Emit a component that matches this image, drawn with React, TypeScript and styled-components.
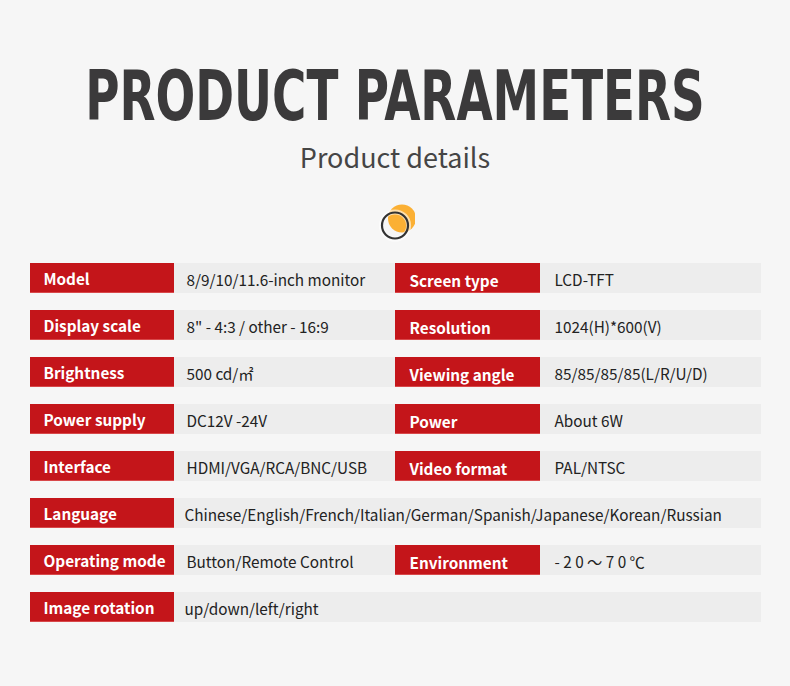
import React from "react";
import styled, { createGlobalStyle } from "styled-components";

const GlobalStyle = createGlobalStyle`
  html, body {
    margin: 0;
    padding: 0;
    background: #f6f6f6;
  }
`;

const Page = styled.div`
  width: 790px;
  height: 686px;
  background: #f6f6f6;
  font-family: "Noto Sans CJK SC", "Noto Sans", sans-serif;
  display: flex;
  flex-direction: column;
  align-items: center;
  overflow: hidden;
`;

const Title = styled.h1`
  margin: 58px 0 0;
  font-family: "DejaVu Sans Condensed", "DejaVu Sans", sans-serif;
  font-weight: 700;
  font-size: 70px;
  line-height: 76px;
  color: #3b3a3b;
  transform: scaleX(0.743);
  white-space: nowrap;
`;

const Subtitle = styled.h2`
  margin: 5px 0 0;
  font-weight: 400;
  font-size: 27px;
  line-height: 35px;
  color: #454545;
`;

const Mark = styled.svg`
  margin-top: 29px;
  width: 40px;
  height: 40px;
`;

const Table = styled.div`
  margin-top: 20px;
  width: 731px;
  display: flex;
  flex-direction: column;
  gap: 17px;
`;

const Row = styled.div`
  display: flex;
  height: 30px;
  background: #ededed;
`;

const Label = styled.div<{ $w: number; $pad: number; $shift?: number }>`
  width: ${(p) => p.$w}px;
  flex: none;
  box-sizing: border-box;
  padding-left: ${(p) => p.$pad}px;
  padding-top: ${(p) => p.$shift ?? 0}px;
  background: #c4151a;
  border-bottom: 1px solid #d8484a;
  color: #fff;
  font-weight: 700;
  font-size: 15.3px;
  display: flex;
  align-items: center;
  white-space: nowrap;
`;

const Value = styled.div<{ $w?: number; $pad: number }>`
  ${(p) => (p.$w ? `width: ${p.$w}px; flex: none;` : "flex: 1;")}
  box-sizing: border-box;
  padding-left: ${(p) => p.$pad}px;
  padding-top: 2px;
  color: #222;
  font-size: 15.3px;
  display: flex;
  align-items: center;
  white-space: nowrap;
`;

type Spec = {
  k1: string;
  v1: string;
  k2?: string;
  v2?: string;
};

const specs: Spec[] = [
  { k1: "Model", v1: "8/9/10/11.6-inch monitor", k2: "Screen type", v2: "LCD-TFT" },
  { k1: "Display scale", v1: "8\" - 4:3 / other - 16:9", k2: "Resolution", v2: "1024(H)*600(V)" },
  { k1: "Brightness", v1: "500 cd/㎡", k2: "Viewing angle", v2: "85/85/85/85(L/R/U/D)" },
  { k1: "Power supply", v1: "DC12V -24V", k2: "Power", v2: "About 6W" },
  { k1: "Interface", v1: "HDMI/VGA/RCA/BNC/USB", k2: "Video format", v2: "PAL/NTSC" },
  { k1: "Language", v1: "Chinese/English/French/Italian/German/Spanish/Japanese/Korean/Russian" },
  { k1: "Operating mode", v1: "Button/Remote Control", k2: "Environment", v2: "- 2 0 ～ 7 0 ℃" },
  { k1: "Image rotation", v1: "up/down/left/right" },
];

export default function App() {
  return (
    <Page>
      <GlobalStyle />
      <Title>PRODUCT PARAMETERS</Title>
      <Subtitle>Product details</Subtitle>
      <Mark viewBox="0 0 40 40">
        <circle cx="27" cy="15.5" r="14" fill="#fbb034" />
        <circle cx="20" cy="22.5" r="13.6" fill="none" stroke="#ffffff" strokeOpacity="0.6" strokeWidth="5" />
        <circle cx="20" cy="22.5" r="13" fill="none" stroke="#333" strokeWidth="2.2" />
      </Mark>
      <Table>
        {specs.map((s) => (
          <Row key={s.k1}>
            <Label $w={144} $pad={14}>{s.k1}</Label>
            {s.k2 ? (
              <>
                <Value $w={221} $pad={13}>{s.v1}</Value>
                <Label $w={145} $pad={15} $shift={5}>{s.k2}</Label>
                <Value $pad={15}>{s.v2}</Value>
              </>
            ) : (
              <Value $pad={11}>{s.v1}</Value>
            )}
          </Row>
        ))}
      </Table>
    </Page>
  );
}
